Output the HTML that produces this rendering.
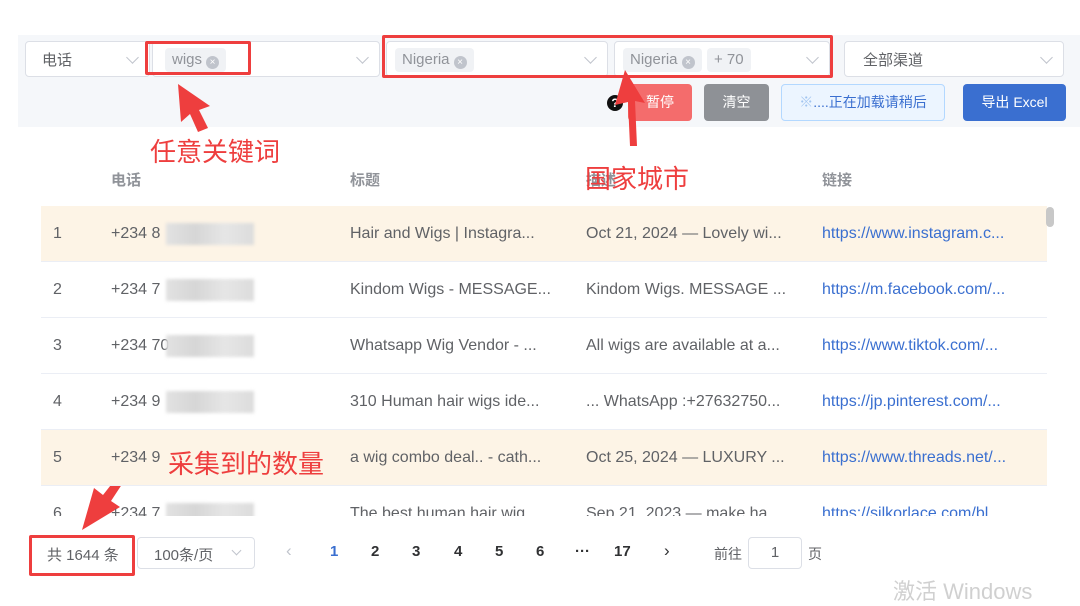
<!DOCTYPE html>
<html><head><meta charset="utf-8"><style>
*{margin:0;padding:0;box-sizing:border-box}
body{width:1080px;height:586px;overflow:hidden;background:#fff;position:relative;font-family:"Liberation Sans","Noto Sans CJK SC",sans-serif;color:#606266}
.a{position:absolute}
.panel{left:18px;top:35px;width:1062px;height:92px;background:#f5f7fa}
.sel{background:#fff;border:1px solid #dcdfe6;border-radius:4px;height:36px;top:41px}
.sel .t{position:absolute;left:16px;top:7px;font-size:15px;color:#606266}
.chev{position:absolute;right:12px;top:11px;width:9px;height:9px;border-right:1px solid #c0c4cc;border-bottom:1px solid #c0c4cc;transform:rotate(45deg)}
.tag{position:absolute;top:6px;height:24px;background:#f0f2f5;border-radius:4px;font-size:15px;color:#909399;padding:3px 7px;line-height:18px}
.x{display:inline-block;width:13px;height:13px;border-radius:50%;background:#c0c4cc;color:#fff;font-size:10px;line-height:13px;text-align:center;margin-left:4px;vertical-align:-1px}
.red{border:3px solid #ee3e3e;border-radius:2px}
.btn{top:84px;height:37px;border-radius:4px;font-size:14px;color:#fff;text-align:center;line-height:37px}
.ann{color:#ee3e3e;font-size:26px;font-family:"Noto Sans CJK SC",sans-serif;line-height:30px}
.th{top:169px;font-size:15px;font-weight:bold;color:#909399}
.row{left:41px;width:1006px;height:56px;border-bottom:1px solid #ebeef5;font-size:16px;color:#606266}
.row span{position:absolute;top:19px;white-space:nowrap}
.row .l{color:#3a6fd0}
.blur{position:absolute;top:17px;left:125px;width:88px;height:22px;background:linear-gradient(90deg,#e2e2e2,#d6d6d6,#e6e6e6,#dcdcdc);filter:blur(1.5px)}
.pg{top:543px;font-size:15px;font-weight:bold;color:#303133}
</style></head><body>
<div class="a panel"></div>
<div class="a sel" style="left:25px;width:125px"><span class="t">电话</span><i class="chev"></i></div>
<div class="a sel" style="left:152px;width:228px"><span class="tag" style="left:12px">wigs<span class="x">×</span></span><i class="chev"></i></div>
<div class="a sel" style="left:386px;width:222px"><span class="tag" style="left:8px">Nigeria<span class="x">×</span></span><i class="chev"></i></div>
<div class="a sel" style="left:614px;width:216px"><span class="tag" style="left:8px">Nigeria<span class="x">×</span></span><span class="tag" style="left:92px">+ 70</span><i class="chev"></i></div>
<div class="a sel" style="left:844px;width:220px"><span class="t" style="left:18px">全部渠道</span><i class="chev"></i></div>
<div class="a red" style="left:145px;top:41px;width:106px;height:34px"></div>
<div class="a red" style="left:382px;top:35px;width:451px;height:43px"></div>
<div class="a" style="left:607px;top:95px;width:16px;height:16px;border-radius:50%;background:#111;color:#fff;font-size:12px;font-weight:bold;text-align:center;line-height:16px">?</div>
<div class="a btn" style="left:628px;width:64px;background:#f46c6c">暂停</div>
<div class="a btn" style="left:704px;width:65px;background:#8e9196">清空</div>
<div class="a btn" style="left:781px;width:164px;background:#ecf5ff;border:1px solid #b3d8ff;color:#3a6fd0;line-height:35px"><span style="color:#a0c4f0">※</span>....正在加载请稍后</div>
<div class="a btn" style="left:963px;width:103px;background:#3a6fd0">导出 Excel</div>
<svg class="a" style="left:0;top:0" width="1080" height="586">
<polygon points="178,84 210,106 199,110 208,128 198,132 190,114 181,122" fill="#ee3e3e"/>
<polygon points="625,70 645,103 635,101 637,146 630,146 628,102 615,105" fill="#ee3e3e"/>
<polygon points="134,466 111,501 120,507 82,530 94,488 103,495 129,462" fill="#ee3e3e"/>
</svg>
<div class="a ann" style="left:150px;top:136px">任意关键词</div>
<div class="a th" style="left:111px">电话</div>
<div class="a th" style="left:350px">标题</div>
<div class="a th" style="left:586px">描述</div>
<div class="a ann" style="left:585px;top:163px">国家城市</div>
<div class="a th" style="left:822px">链接</div>
<div class="a" style="left:41px;top:206px;width:1006px;height:310px;overflow:hidden">
<div class="a row" style="top:0;left:0;background:#fdf4e6"><span style="left:12px">1</span><span style="left:70px">+234 8</span><div class="blur"></div><span style="left:309px">Hair and Wigs | Instagra...</span><span style="left:545px">Oct 21, 2024 — Lovely wi...</span><span class="l" style="left:781px">https://www.instagram.c...</span></div>
<div class="a row" style="top:56px;left:0"><span style="left:12px">2</span><span style="left:70px">+234 7</span><div class="blur"></div><span style="left:309px">Kindom Wigs - MESSAGE...</span><span style="left:545px">Kindom Wigs. MESSAGE ...</span><span class="l" style="left:781px">https://m.facebook.com/...</span></div>
<div class="a row" style="top:112px;left:0"><span style="left:12px">3</span><span style="left:70px">+234 70</span><div class="blur"></div><span style="left:309px">Whatsapp Wig Vendor - ...</span><span style="left:545px">All wigs are available at a...</span><span class="l" style="left:781px">https://www.tiktok.com/...</span></div>
<div class="a row" style="top:168px;left:0"><span style="left:12px">4</span><span style="left:70px">+234 9</span><div class="blur"></div><span style="left:309px">310 Human hair wigs ide...</span><span style="left:545px">... WhatsApp :+27632750...</span><span class="l" style="left:781px">https://jp.pinterest.com/...</span></div>
<div class="a row" style="top:224px;left:0;background:#fdf4e6"><span style="left:12px">5</span><span style="left:70px">+234 9</span><span style="left:309px">a wig combo deal.. - cath...</span><span style="left:545px">Oct 25, 2024 — LUXURY ...</span><span class="l" style="left:781px">https://www.threads.net/...</span></div>
<div class="a row" style="top:280px;left:0"><span style="left:12px">6</span><span style="left:70px">+234 7</span><div class="blur"></div><span style="left:309px">The best human hair wig...</span><span style="left:545px">Sep 21, 2023 — make ha...</span><span class="l" style="left:781px">https://silkorlace.com/bl...</span></div>
</div>
<div class="a" style="left:1046px;top:207px;width:8px;height:20px;border-radius:4px;background:#c8c8c8"></div>
<div class="a ann" style="left:168px;top:448px">采集到的数量</div>
<div class="a red" style="left:29px;top:535px;width:106px;height:41px"></div>
<div class="a" style="left:47px;top:544px;font-size:15px;color:#606266">共 1644 条</div>
<div class="a" style="left:137px;top:537px;width:118px;height:32px;border:1px solid #dcdfe6;border-radius:4px;font-size:15px;padding:6px 16px">100条/页<i class="chev" style="top:9px;right:14px;width:7px;height:7px"></i></div>
<div class="a" style="left:286px;top:541px;font-size:17px;color:#c0c4cc">‹</div>
<div class="a pg" style="left:330px;color:#3a6fd0">1</div>
<div class="a pg" style="left:371px">2</div>
<div class="a pg" style="left:412px">3</div>
<div class="a pg" style="left:454px">4</div>
<div class="a pg" style="left:495px">5</div>
<div class="a pg" style="left:536px">6</div>
<div class="a pg" style="left:575px">···</div>
<div class="a pg" style="left:614px">17</div>
<div class="a" style="left:664px;top:541px;font-size:17px;color:#303133">›</div>
<div class="a" style="left:714px;top:544px;font-size:14px">前往</div>
<div class="a" style="left:748px;top:537px;width:54px;height:32px;border:1px solid #dcdfe6;border-radius:4px;text-align:center;line-height:30px;font-size:15px">1</div>
<div class="a" style="left:808px;top:544px;font-size:14px">页</div>
<div class="a" style="left:893px;top:574px;font-size:22px;color:#d0d0d0">激活 Windows</div>
</body></html>
